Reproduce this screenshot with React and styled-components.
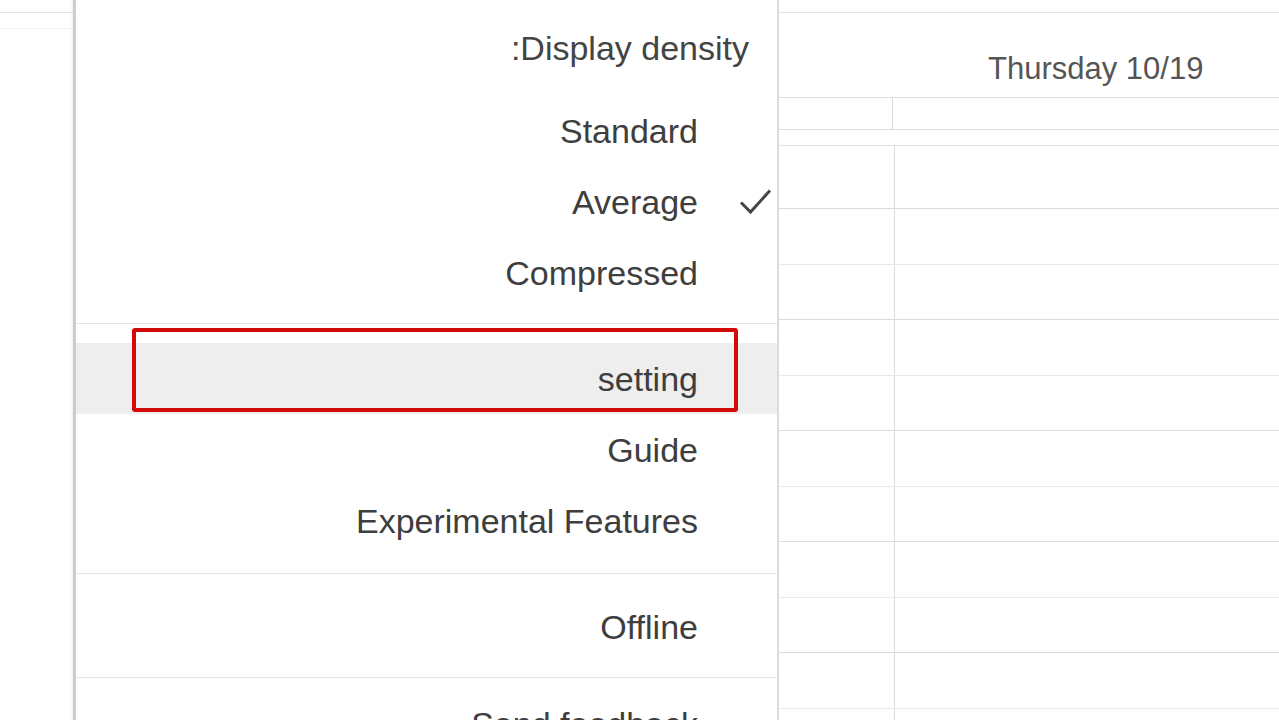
import React from "react";
import styled, { createGlobalStyle } from "styled-components";

const GlobalStyle = createGlobalStyle`
  html, body {
    margin: 0;
    padding: 0;
    background: #ffffff;
    overflow: hidden;
  }
  body {
    font-family: "Liberation Sans", Arial, sans-serif;
  }
`;

// hour lines in the day grid, darker on the hour
const hourRows = [
  { dark: false },
  { dark: true },
  { dark: false },
  { dark: true },
  { dark: false },
  { dark: true },
  { dark: false },
  { dark: true },
  { dark: false },
  { dark: true },
  { dark: false },
];

const App = () => {
  return (
    <>
      <GlobalStyle />
      <Screen>
        <SideStrip>
          <SideLine $h={12} />
          <SideLine $h={15} $light />
        </SideStrip>

        <Menu>
          <MenuHeader>:Display density</MenuHeader>

          <Item>
            <Label>Standard</Label>
            <CheckSlot />
          </Item>
          <Item>
            <Label>Average</Label>
            <CheckSlot>
              <svg width="33" height="27" viewBox="0 0 33 27">
                <path
                  d="M2 14.5 L11.5 24 L31 2.5"
                  fill="none"
                  stroke="#454545"
                  strokeWidth="3"
                  strokeLinejoin="miter"
                />
              </svg>
            </CheckSlot>
          </Item>
          <Item>
            <Label>Compressed</Label>
            <CheckSlot />
          </Item>

          <Divider $above={15} $below={19} />

          <Item $active>
            <Label>setting</Label>
            <CheckSlot />
            <Highlight />
          </Item>
          <Item>
            <Label>Guide</Label>
            <CheckSlot />
          </Item>
          <Item>
            <Label>Experimental Features</Label>
            <CheckSlot />
          </Item>

          <Divider $above={17} $below={17} />

          <Item>
            <Label>Offline</Label>
            <CheckSlot />
          </Item>

          <Divider $above={15} $below={10} />

          <Item>
            <Label>Send feedback</Label>
            <CheckSlot />
          </Item>
        </Menu>

        <Calendar>
          <TopBar />
          <DayHeader>Thursday 10/19</DayHeader>
          <AllDayRow>
            <AllDayCell />
            <AllDayCell $main />
          </AllDayRow>
          <SpacerRow />
          <TimeGrid>
            {hourRows.map((row, i) => (
              <HourRow key={i} $dark={row.dark} $first={i === 0}>
                <TimeCell />
                <SlotCell />
              </HourRow>
            ))}
          </TimeGrid>
        </Calendar>
      </Screen>
    </>
  );
};

const Screen = styled.div`
  display: flex;
  width: 1279px;
  height: 720px;
  overflow: hidden;
  background: #ffffff;
`;

const SideStrip = styled.div`
  width: 73px;
  flex-shrink: 0;
  display: flex;
  flex-direction: column;
  background: #ffffff;
`;

const SideLine = styled.div`
  height: ${(p) => p.$h}px;
  flex-shrink: 0;
  border-bottom: 1px solid ${(p) => (p.$light ? "#f1f1f1" : "#e2e2e2")};
`;

const Menu = styled.div`
  position: relative;
  width: 701px;
  flex-shrink: 0;
  display: flex;
  flex-direction: column;
  overflow: hidden;
  background: #ffffff;
  border-left: 3px solid #cdcdcd;
  border-right: 2px solid #dcdcdc;
  box-shadow: -1px 0 2px rgba(0, 0, 0, 0.08);
  color: #3e3e3e;
  font-size: 34px;
`;

const MenuHeader = styled.div`
  display: flex;
  align-items: center;
  justify-content: flex-end;
  height: 70px;
  flex-shrink: 0;
  margin-top: 13px;
  margin-bottom: 12px;
  padding-right: 28px;
  color: #444444;
`;

const Item = styled.div`
  position: relative;
  display: flex;
  align-items: center;
  justify-content: flex-end;
  height: 71px;
  flex-shrink: 0;
  background: ${(p) => (p.$active ? "#eeeeee" : "transparent")};
`;

const Label = styled.span`
  white-space: nowrap;
  line-height: 1;
`;

const CheckSlot = styled.div`
  width: 79px;
  display: flex;
  align-items: center;
  padding-left: 41px;
  box-sizing: border-box;
  flex-shrink: 0;
`;

const Highlight = styled.div`
  position: absolute;
  left: 56px;
  top: -15px;
  width: 606px;
  height: 84px;
  box-sizing: border-box;
  border: 4px solid #d20a0a;
  border-radius: 3px;
  pointer-events: none;
`;

const Divider = styled.div`
  height: 1px;
  flex-shrink: 0;
  background: #e4e4e4;
  margin: ${(p) => p.$above}px 0 ${(p) => p.$below}px;
`;

const Calendar = styled.div`
  flex: 1;
  display: flex;
  flex-direction: column;
  overflow: hidden;
  background: #ffffff;
`;

const TopBar = styled.div`
  height: 12px;
  flex-shrink: 0;
  border-bottom: 1px solid #e3e3e3;
`;

const DayHeader = styled.div`
  height: 85px;
  flex-shrink: 0;
  box-sizing: border-box;
  padding: 38px 0 0 209px;
  font-size: 31px;
  color: #555555;
  border-bottom: 1px solid #dddddd;
  white-space: nowrap;
`;

const AllDayRow = styled.div`
  display: grid;
  grid-template-columns: 114px 1fr;
  height: 31px;
  flex-shrink: 0;
  border-bottom: 1px solid #dddddd;
`;

const AllDayCell = styled.div`
  border-right: ${(p) => (p.$main ? "none" : "1px solid #dadada")};
`;

const SpacerRow = styled.div`
  height: 15px;
  flex-shrink: 0;
  border-bottom: 1px solid #e3e3e3;
`;

const TimeGrid = styled.div`
  display: flex;
  flex-direction: column;
  flex-shrink: 0;
`;

const HourRow = styled.div`
  display: grid;
  grid-template-columns: 116px 1fr;
  height: ${(p) => (p.$first ? 62 : 54.5)}px;
  flex-shrink: 0;
  border-bottom: 1px solid ${(p) => (p.$dark ? "#e9e9e9" : "#dcdcdc")};
`;

const TimeCell = styled.div`
  border-right: 1px solid #dadada;
`;

const SlotCell = styled.div``;

export default App;
